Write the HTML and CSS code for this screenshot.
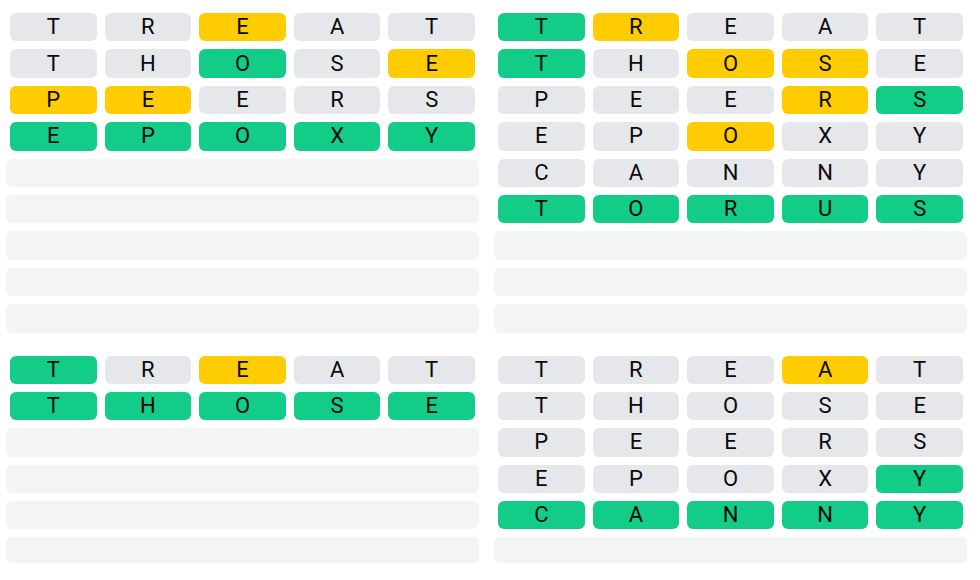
FILE: index.html
```html
<!DOCTYPE html>
<html lang="en">
<head>
<meta charset="utf-8">
<title>Boards</title>
<link rel="stylesheet" href="styles.css">
</head>
<body>
<main class="game">
  <section class="board board--top">
    <div class="row"><span class="tile gray">T</span><span class="tile gray">R</span><span class="tile yellow">E</span><span class="tile gray">A</span><span class="tile gray">T</span></div>
    <div class="row"><span class="tile gray">T</span><span class="tile gray">H</span><span class="tile green">O</span><span class="tile gray">S</span><span class="tile yellow">E</span></div>
    <div class="row"><span class="tile yellow">P</span><span class="tile yellow">E</span><span class="tile gray">E</span><span class="tile gray">R</span><span class="tile gray">S</span></div>
    <div class="row"><span class="tile green">E</span><span class="tile green">P</span><span class="tile green">O</span><span class="tile green">X</span><span class="tile green">Y</span></div>
    <div class="row row--empty"><span class="cell"></span><span class="cell"></span><span class="cell"></span><span class="cell"></span><span class="cell"></span></div>
    <div class="row row--empty"><span class="cell"></span><span class="cell"></span><span class="cell"></span><span class="cell"></span><span class="cell"></span></div>
    <div class="row row--empty"><span class="cell"></span><span class="cell"></span><span class="cell"></span><span class="cell"></span><span class="cell"></span></div>
    <div class="row row--empty"><span class="cell"></span><span class="cell"></span><span class="cell"></span><span class="cell"></span><span class="cell"></span></div>
    <div class="row row--empty"><span class="cell"></span><span class="cell"></span><span class="cell"></span><span class="cell"></span><span class="cell"></span></div>
  </section>
  <section class="board board--top">
    <div class="row"><span class="tile green">T</span><span class="tile yellow">R</span><span class="tile gray">E</span><span class="tile gray">A</span><span class="tile gray">T</span></div>
    <div class="row"><span class="tile green">T</span><span class="tile gray">H</span><span class="tile yellow">O</span><span class="tile yellow">S</span><span class="tile gray">E</span></div>
    <div class="row"><span class="tile gray">P</span><span class="tile gray">E</span><span class="tile gray">E</span><span class="tile yellow">R</span><span class="tile green">S</span></div>
    <div class="row"><span class="tile gray">E</span><span class="tile gray">P</span><span class="tile yellow">O</span><span class="tile gray">X</span><span class="tile gray">Y</span></div>
    <div class="row"><span class="tile gray">C</span><span class="tile gray">A</span><span class="tile gray">N</span><span class="tile gray">N</span><span class="tile gray">Y</span></div>
    <div class="row"><span class="tile green">T</span><span class="tile green">O</span><span class="tile green">R</span><span class="tile green">U</span><span class="tile green">S</span></div>
    <div class="row row--empty"><span class="cell"></span><span class="cell"></span><span class="cell"></span><span class="cell"></span><span class="cell"></span></div>
    <div class="row row--empty"><span class="cell"></span><span class="cell"></span><span class="cell"></span><span class="cell"></span><span class="cell"></span></div>
    <div class="row row--empty"><span class="cell"></span><span class="cell"></span><span class="cell"></span><span class="cell"></span><span class="cell"></span></div>
  </section>
  <section class="board board--bottom">
    <div class="row"><span class="tile green">T</span><span class="tile gray">R</span><span class="tile yellow">E</span><span class="tile gray">A</span><span class="tile gray">T</span></div>
    <div class="row"><span class="tile green">T</span><span class="tile green">H</span><span class="tile green">O</span><span class="tile green">S</span><span class="tile green">E</span></div>
    <div class="row row--empty"><span class="cell"></span><span class="cell"></span><span class="cell"></span><span class="cell"></span><span class="cell"></span></div>
    <div class="row row--empty"><span class="cell"></span><span class="cell"></span><span class="cell"></span><span class="cell"></span><span class="cell"></span></div>
    <div class="row row--empty"><span class="cell"></span><span class="cell"></span><span class="cell"></span><span class="cell"></span><span class="cell"></span></div>
    <div class="row row--empty"><span class="cell"></span><span class="cell"></span><span class="cell"></span><span class="cell"></span><span class="cell"></span></div>
  </section>
  <section class="board board--bottom">
    <div class="row"><span class="tile gray">T</span><span class="tile gray">R</span><span class="tile gray">E</span><span class="tile yellow">A</span><span class="tile gray">T</span></div>
    <div class="row"><span class="tile gray">T</span><span class="tile gray">H</span><span class="tile gray">O</span><span class="tile gray">S</span><span class="tile gray">E</span></div>
    <div class="row"><span class="tile gray">P</span><span class="tile gray">E</span><span class="tile gray">E</span><span class="tile gray">R</span><span class="tile gray">S</span></div>
    <div class="row"><span class="tile gray">E</span><span class="tile gray">P</span><span class="tile gray">O</span><span class="tile gray">X</span><span class="tile green">Y</span></div>
    <div class="row"><span class="tile green">C</span><span class="tile green">A</span><span class="tile green">N</span><span class="tile green">N</span><span class="tile green">Y</span></div>
    <div class="row row--empty"><span class="cell"></span><span class="cell"></span><span class="cell"></span><span class="cell"></span><span class="cell"></span></div>
  </section>
</main>
</body>
</html>
```

FILE: styles.css
```css
* { box-sizing: border-box; }
html, body {
  margin: 0;
  padding: 0;
  background: #ffffff;
  width: 980px;
  height: 580px;
  overflow: hidden;
}
body {
  font-family: Roboto, "Liberation Sans", sans-serif;
  color: #111111;
}
.game {
  display: grid;
  grid-template-columns: 473px 473px;
  column-gap: 15px;
  row-gap: 23px;
  padding: 13px 0 0 6px;
  align-items: start;
}
.board {
  display: grid;
  row-gap: 8px;
}
.board--top {
  grid-template-rows: repeat(9, 28.4px);
}
.board--bottom {
  grid-template-rows: repeat(5, 28.4px) 26px;
}
.row {
  display: grid;
  grid-template-columns: repeat(5, 1fr);
}
.tile {
  margin: 0 4px;
  border-radius: 6px;
  display: flex;
  align-items: center;
  justify-content: center;
  font-size: 22px;
  line-height: 1;
  font-weight: 400;
  color: #0a0a0a;
}
.gray { background: #e5e7eb; }
.yellow { background: #fecc00; }
.green { background: #12cc88; }
.cell {
  background: #f3f4f6;
}
.row--empty .cell:first-child { border-radius: 6px 0 0 6px; }
.row--empty .cell:last-child { border-radius: 0 6px 6px 0; }
```
